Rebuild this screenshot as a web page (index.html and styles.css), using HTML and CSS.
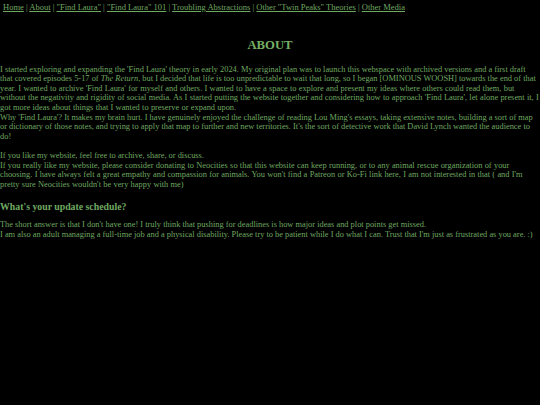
FILE: index.html
```html
<!DOCTYPE html>
<html>
<head>
<meta charset="utf-8">
<link rel="stylesheet" href="styles.css">
</head>
<body>
<nav class="nav">
<a href="#">Home</a> | <a href="#">About</a> | <a href="#">"Find Laura"</a> | <a href="#">"Find Laura" 101</a> | <a href="#">Troubling Abstractions</a> | <a href="#">Other "Twin Peaks" Theories</a> | <a href="#">Other Media</a>
</nav>
<main class="content">
<h2 class="title">ABOUT</h2>
<p class="para">I started exploring and expanding the 'Find Laura' theory in early 2024. My original plan was to launch this webspace with archived versions and a first draft that covered episodes 5-17 of <i>The Return</i>, but I decided that life is too unpredictable to wait that long, so I began [OMINOUS WOOSH] towards the end of that <span class="wide">year. I wanted to archive 'Find Laura' for myself and others. I wanted to have a space to explore and present my ideas where others could read them, but without the negativity and rigidity of social media. As I started putting the website together and considering how to approach 'Find Laura', let alone present it, I got more ideas about things that I wanted to preserve or expand upon.</span><br>Why 'Find Laura'? It makes my brain hurt. I have genuinely enjoyed the challenge of reading Lou Ming's essays, taking extensive notes, building a sort of map or dictionary of those notes, and trying to apply that map to further and new territories. It's the sort of detective work that David Lynch wanted the audience to do!<br><br>If you like my website, feel free to archive, share, or discuss.<br><span class="wide">If you really like my website, please consider donating to Neocities so that this website can keep running, or to any animal rescue organization of your choosing. I have always felt a great empathy and compassion for animals. You won't find a Patreon or Ko-Fi link here, I am not interested in that ( and I'm pretty sure Neocities wouldn't be very happy with me)</span></p>
<h3 class="sub">What's your update schedule?</h3>
<p class="para">The short answer is that I don't have one! I truly think that pushing for deadlines is how major ideas and plot points get missed.<br>I am also an adult managing a full-time job and a physical disability. Please try to be patient while I do what I can. Trust that I'm just as frustrated as you are. :)</p>
</main>
</body>
</html>
```
FILE: styles.css
```css
html, body {
  margin: 0;
  padding: 0;
  background: #000;
}
body {
  color: #6fa860;
  font-family: "Liberation Serif", "Times New Roman", serif;
  font-size: 8.4px;
  line-height: 9.6px;
}
.nav {
  padding: 3px 3px 0;
  font-size: 8.5px;
}
.nav a {
  color: #6fa860;
  text-decoration: underline;
}
.content {
  padding: 0;
}
.title {
  text-align: center;
  font-size: 12.7px;
  line-height: 15px;
  font-weight: bold;
  margin: 25px 0 12px;
  color: #74b064;
}
.para {
  margin: 0;
}
.wide {
  word-spacing: 0.2px;
}
.sub {
  font-size: 9.8px;
  line-height: 11px;
  font-weight: bold;
  margin: 12px 0 8px;
}
```
